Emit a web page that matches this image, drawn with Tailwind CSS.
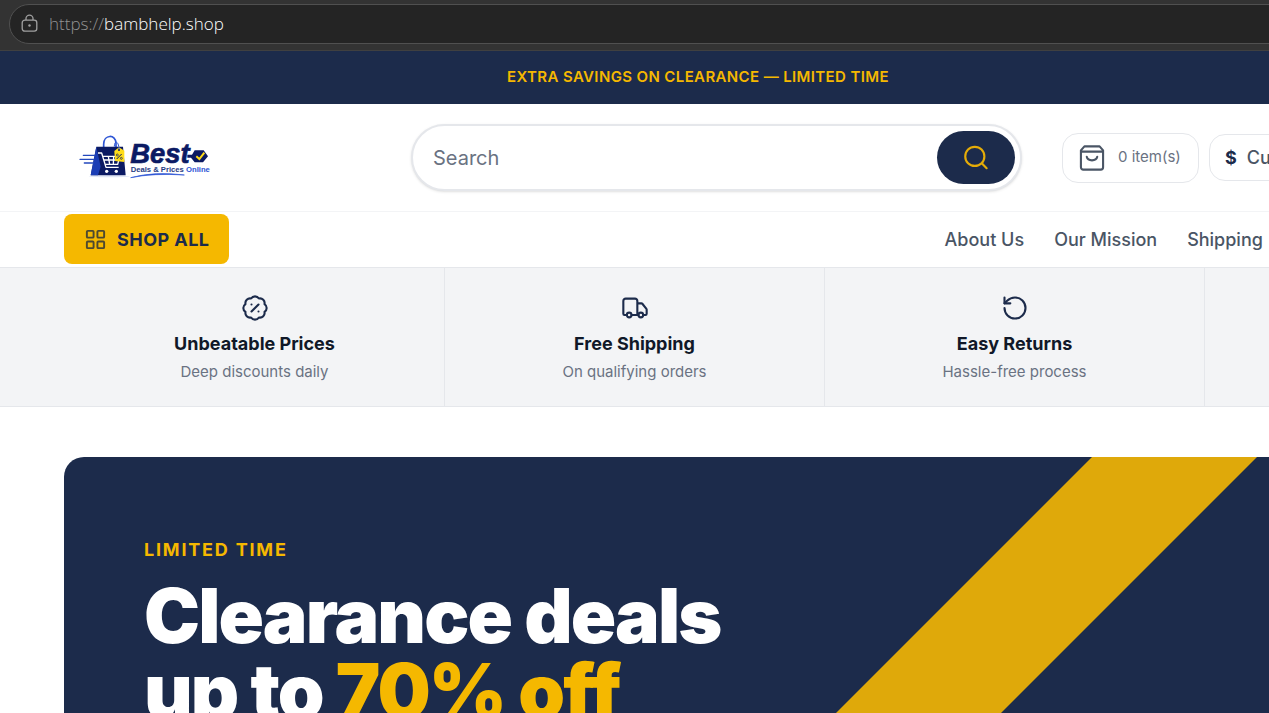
<!DOCTYPE html>
<html lang="en">
<head>
<meta charset="utf-8">
<meta name="viewport" content="width=device-width, initial-scale=1">
<title>Best Deals &amp; Prices Online</title>
<script src="https://cdn.jsdelivr.net/npm/@tailwindcss/browser@4"></script>
</head>
<body class="h-screen overflow-hidden bg-white font-['Inter',sans-serif] text-[#1c2b4b]">
<!-- Browser address bar -->
<div class="h-[51px] overflow-hidden border-b border-[#404040] bg-[#333333] pt-1 pl-[9px]">
  <div class="-mr-10 flex h-10 items-center gap-[9px] rounded-full border border-[#505050] bg-[#242424] pl-[10px]">
    <svg class="size-5 text-[#a0a0a0]" viewBox="0 0 20 20" fill="none" stroke="currentColor" stroke-width="1.3" aria-hidden="true"><rect x="2.2" y="6.2" width="14.6" height="11" rx="2.6"/><path d="M6 6V4.6a3.5 3.5 0 0 1 7 0V6"/><circle cx="9.5" cy="11.5" r="1.2" fill="currentColor" stroke="none"/></svg>
    <button type="button" class="pb-px font-['Open_Sans',sans-serif] text-[17px] leading-6 font-light text-[#929292]">https://<span class="text-white">bambhelp.shop</span></button>
  </div>
</div>

<!-- The storefront is wider than the window and is cut at the right -->
<div class="w-[110%]">
  <div class="flex h-[53px] items-center justify-center bg-[#1c2b4b] text-[15px] font-semibold tracking-wide text-[#f5b800]">EXTRA SAVINGS ON CLEARANCE — LIMITED TIME</div>

  <header>
    <div class="flex h-[108px] items-center border-b border-gray-100 pr-16 pl-[70px]">
      <a href="#" aria-label="Best Deals &amp; Prices Online" class="mr-[191px] mb-1 shrink-0">
        <svg class="h-[60px] w-[150px]" viewBox="0 0 450 180" aria-hidden="true">
          <ellipse cx="118" cy="151" rx="62" ry="3" fill="#dfe5f5"/>
          <path d="M101 66V55c0-31 37-31 37-3v14" fill="none" stroke="#2d55d5" stroke-width="5"/>
          <path d="M79 62h80l8 86H62z" fill="#0b1a63"/>
          <path d="M79 62 62 148h22l8-26z" fill="#1b3db5"/>
          <path d="M40 88h34M30 100h42M43 111h28" stroke="#2348bd" stroke-width="4" stroke-linecap="round"/>
          <path d="M84 81h11l13 43h38M97 91h52l-6 24h-38M101 102h44M115 91l4 24M131 91l-1 24" fill="none" stroke="#fff" stroke-width="4" stroke-linejoin="round"/>
          <circle cx="110" cy="136" r="5" fill="#fff"/><circle cx="139" cy="136" r="5" fill="#fff"/>
          <path d="M133 75 147 64l16 10v34l-28-3z" fill="#ffdc19"/>
          <circle cx="147" cy="72" r="3" fill="#0b1a63"/>
          <path d="m140 99 15-15" stroke="#0b1a63" stroke-width="3"/><circle cx="142" cy="87" r="3" fill="none" stroke="#0b1a63" stroke-width="2"/><circle cx="154" cy="97" r="3" fill="none" stroke="#0b1a63" stroke-width="2"/>
          <path d="M133 62c0-22 14-16 14 8" fill="none" stroke="#2d55d5" stroke-width="3"/>
          <text x="181" y="112" fill="#0b1a63" stroke="#0b1a63" stroke-width="2" font-family="Liberation Sans, sans-serif" font-size="82" font-weight="700" font-style="italic">Best</text>
          <path d="M352 86h14l8-13h27l13 18-15 18h-25l-11-14h-11z" fill="#0b1a63"/>
          <path d="m379 91 9 8 15-19" fill="none" stroke="#ffdc19" stroke-width="6"/>
          <text x="182" y="137" fill="#263b83" font-family="Liberation Sans, sans-serif" font-size="23" font-weight="700">Deals &amp; Prices <tspan fill="#2d55d5">Online</tspan></text>
          <path d="M182 155q74-20 161-8-92-6-161 8z" fill="#2d55d5" stroke="#2d55d5" stroke-width="2"/>
        </svg>
      </a>
      <form class="flex h-[67px] w-[611px] shrink-0 items-center rounded-full border-2 border-gray-200 bg-white pr-[5px] pl-5 shadow-sm" onsubmit="return false">
        <input type="search" placeholder="Search" aria-label="Search" class="min-w-0 flex-1 text-[20px] outline-none placeholder:text-gray-500">
        <button type="submit" aria-label="Search" class="flex h-[53px] w-[78px] items-center justify-center rounded-full bg-[#1c2b4b] text-[#e5ac08]">
          <svg class="size-[27px]" viewBox="0 0 24 24" fill="none" stroke="currentColor" stroke-width="1.900" stroke-linecap="round" stroke-linejoin="round"><circle cx="10.500" cy="11" r="8.500"/><path d="m21 21.500-4.300-4.300"/></svg>
        </button>
      </form>
      <button type="button" class="ml-10 flex h-[50px] w-[137px] shrink-0 items-center gap-3 rounded-2xl border border-gray-200 pl-[15px] text-[15px] whitespace-nowrap text-gray-500">
        <svg class="size-7 shrink-0 text-gray-600" viewBox="0 0 24 24" fill="none" stroke="currentColor" stroke-width="1.800" stroke-linecap="round" stroke-linejoin="round"><path d="M5.500 2h13L21.500 5.500V20a2 2 0 0 1-2 2h-15a2 2 0 0 1-2-2V5.500zM2.500 6.500h19M7.500 11c1 4 8 4 9 0"/></svg>
        0 item(s)
      </button>
      <button type="button" class="ml-[10px] flex h-[47px] shrink-0 items-center gap-[10px] rounded-2xl border border-gray-200 px-[15px] text-[18px] font-medium text-gray-600"><strong class="font-bold text-[#1c2b4b]">$</strong>Currency</button>
    </div>

    <div class="flex h-[56px] items-center justify-between border-b border-gray-200 pb-px pl-16">
      <button type="button" class="flex h-[50px] items-center gap-[10px] rounded-lg bg-[#f5b800] px-5 text-[18px] font-bold tracking-wide">
        <svg class="size-[23px] text-[#4d4930]" viewBox="0 0 24 24" fill="none" stroke="currentColor" stroke-width="2"><rect x="3" y="3" width="7" height="7" rx="1"/><rect x="14" y="3" width="7" height="7" rx="1"/><rect x="14" y="14" width="7" height="7" rx="1"/><rect x="3" y="14" width="7" height="7" rx="1"/></svg>
        SHOP ALL
      </button>
      <nav aria-label="Pages" class="flex gap-[30px] pr-[133px] text-[18px] font-medium whitespace-nowrap text-gray-600">
        <a href="#">About Us</a><a href="#">Our Mission</a><a href="#">Shipping</a>
      </nav>
    </div>
  </header>

  <section aria-label="Benefits" class="flex h-[139px] overflow-hidden border-b border-gray-200 bg-gray-100 pl-[65px] text-center">
    <div class="flex w-[380px] shrink-0 flex-col items-center border-r border-gray-200 pt-[26px]">
      <svg class="size-7" viewBox="0 0 24 24" fill="none" stroke="currentColor" stroke-width="1.800" stroke-linecap="round" stroke-linejoin="round"><path d="M3.850 8.620a4 4 0 0 1 4.780-4.770 4 4 0 0 1 6.740 0 4 4 0 0 1 4.780 4.780 4 4 0 0 1 0 6.740 4 4 0 0 1-4.770 4.780 4 4 0 0 1-6.750 0 4 4 0 0 1-4.780-4.770 4 4 0 0 1 0-6.760Z"/><path d="m15 9-6 6M9 9h.01M15 15h.01"/></svg>
      <h2 class="mt-2 text-[18px] leading-7 font-bold text-gray-900">Unbeatable Prices</h2>
      <p class="mt-1 text-[15px] leading-5 text-gray-500">Deep discounts daily</p>
    </div>
    <div class="flex w-[380px] shrink-0 flex-col items-center border-r border-gray-200 pt-[26px]">
      <svg class="size-7" viewBox="0 0 24 24" fill="none" stroke="currentColor" stroke-width="1.800" stroke-linecap="round" stroke-linejoin="round"><path d="M14 18V6a2 2 0 0 0-2-2H4a2 2 0 0 0-2 2v11a1 1 0 0 0 1 1h2M15 18H9M19 18h2a1 1 0 0 0 1-1v-3.650a1 1 0 0 0-.22-.624l-3.480-4.350A1 1 0 0 0 17.520 8H14"/><circle cx="17" cy="18" r="2"/><circle cx="7" cy="18" r="2"/></svg>
      <h2 class="mt-2 text-[18px] leading-7 font-bold text-gray-900">Free Shipping</h2>
      <p class="mt-1 text-[15px] leading-5 text-gray-500">On qualifying orders</p>
    </div>
    <div class="flex w-[380px] shrink-0 flex-col items-center border-r border-gray-200 pt-[26px]">
      <svg class="size-7" viewBox="0 0 24 24" fill="none" stroke="currentColor" stroke-width="1.800" stroke-linecap="round" stroke-linejoin="round"><path d="M3 12a9 9 0 1 0 9-9 9.750 9.750 0 0 0-6.740 2.740L3 8"/><path d="M3 3v5h5"/></svg>
      <h2 class="mt-2 text-[18px] leading-7 font-bold text-gray-900">Easy Returns</h2>
      <p class="mt-1 text-[15px] leading-5 text-gray-500">Hassle-free process</p>
    </div>
  </section>

  <main class="px-16 pt-[50px]">
    <section class="relative overflow-hidden rounded-[20px] bg-[#1c2b4b] px-20 pt-20 pb-20">
      <svg class="absolute inset-0 h-full w-full" aria-hidden="true"><path d="M1028 0h165l-400 400H628z" fill="#dfa90a"/></svg>
      <div class="relative">
        <p class="text-[18px] leading-[26px] font-bold tracking-widest text-[#f5b800]">LIMITED TIME</p>
        <h1 class="mt-[15px] text-[75px] leading-[75px] font-black tracking-tight text-white">Clearance deals<br>up to <span class="text-[#f5b800]">70% off</span></h1>
      </div>
    </section>
  </main>
</div>
</body>
</html>
